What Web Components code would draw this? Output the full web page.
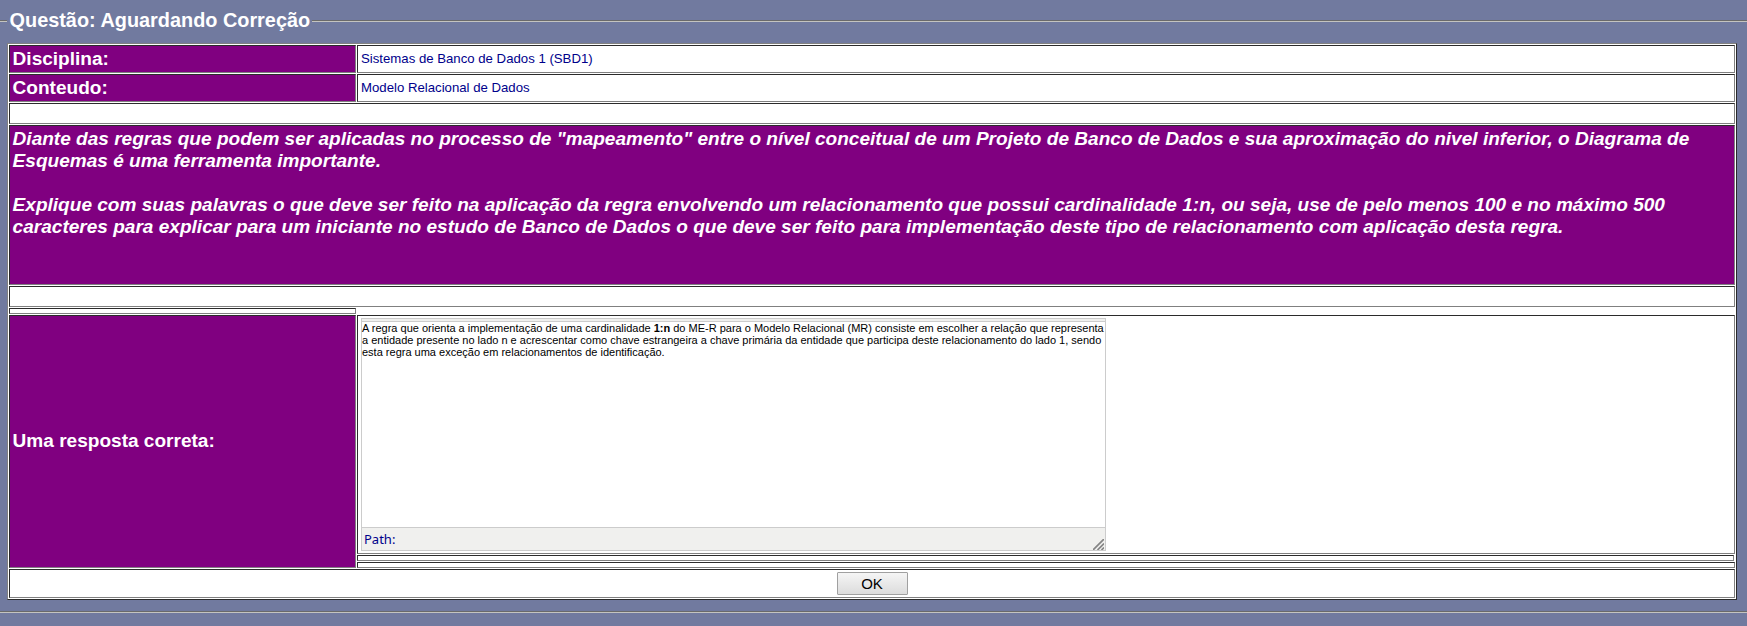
<!DOCTYPE html>
<html lang="pt"><head><meta charset="utf-8"><title>Questão</title>
<style>html,body{margin:0;background:#717a9f}body{height:626px;overflow:hidden;font-family:"Liberation Sans",Arial,sans-serif}</style></head><body>
<question-page></question-page>
<script>
class Base extends HTMLElement{constructor(){super();this.attachShadow({mode:'open'}).innerHTML=this.constructor.html}}
customElements.define('grid-cell',class extends Base{static html=`<style>
:host{box-sizing:border-box;display:flex;align-items:center;min-width:0;padding:0 3px;border:1px solid;border-color:#2b2b2b #808080 #808080 #2b2b2b;background:#fff;color:#00008b;font-size:13.2px;line-height:15px}
:host([data]){padding-bottom:1px}
:host([wide]){grid-column:1/3}
:host([label]){background:#800080;color:#fff;font-weight:bold;font-size:19.06px;line-height:22px;padding-left:2.6px}
:host([question]){align-items:flex-start;font-style:italic;padding-top:2px}
:host([center]){justify-content:center}
:host([editor]){align-items:flex-start;padding-top:2px}
</style><slot></slot>`});
customElements.define('group-frame',class extends Base{static html=`<style>
:host{display:block}.top{display:flex;align-items:center;height:43px;box-sizing:border-box;padding-bottom:1px}
.l,.r,.b{height:1px;border-top:1px solid #6a6a6a;background:#c4c4c0}.l{width:7px}.r{flex:1}
h1{margin:0;padding:0 2px 0 2.6px;font-size:19.86px;line-height:24px;color:#fff;position:relative;top:-1px}
.body{padding:0 10px 0 7px}.b{margin-top:11px}
</style><div class="top"><div class="l"></div><h1><slot name="legend"></slot></h1><div class="r"></div></div><div class="body"><slot></slot></div><div class="b"></div>`});
customElements.define('text-editor',class extends Base{static html=`<style>
:host{box-sizing:border-box;display:flex;flex-direction:column;width:745px;height:233px;border:1px solid #ccc;background:#fff}
.bar{height:2px;background:#f0f0ee;border-bottom:1px solid #ccc}
.text{flex:1;color:#000;font-size:11px;line-height:12px;white-space:nowrap}
.status{height:22px;border-top:1px solid #ccc;background:#f0f0ee;display:flex;justify-content:space-between;align-items:center;padding-left:2px;font:13px/20px "Noto Sans",sans-serif;color:#00008b}
svg{display:block;align-self:flex-end;margin-right:1px}
</style><div class="bar"></div><div class="text"><slot></slot></div><div class="status"><span>Path:</span><svg width="11" height="11" viewBox="0 0 11 11" fill="none" stroke="#858585" stroke-width="1.7"><path d="M0 11L11 0M4.5 11L11 4.5M8.5 11L11 8.5"/></svg></div>`});
customElements.define('push-button',class extends Base{static html=`<style>
:host{display:block}button{display:block;box-sizing:border-box;width:71px;height:23px;margin:0;padding:0;border:1px solid #a0a0a0;border-radius:1px;background:linear-gradient(#f5f5f5,#dcdcdc);font:15px "Liberation Sans",sans-serif;color:#000}
</style><button><slot></slot></button>`});
customElements.define('question-page',class extends Base{static html=`<style>
:host{display:block}
.table{display:grid;box-sizing:border-box;height:557px;grid-template-columns:347px 1fr;grid-template-rows:28px 28px 21px 160px 21px 6px 239px 6px 6px 29px;gap:1px;padding:1px;border:1px solid;border-color:#808080 #2b2b2b #2b2b2b #808080;background:#fff}
.tall{grid-area:7/1/10/2;padding-bottom:2px}.c1{grid-area:6/1}.r7{grid-area:7/2}.r8{grid-area:8/2;margin-right:1px}.r9{grid-area:9/2}.r10{grid-row:10}
</style><group-frame><span slot="legend">Questão: Aguardando Correção</span><div class="table">
<grid-cell label>Disciplina:</grid-cell><grid-cell data>Sistemas de Banco de Dados 1 (SBD1)</grid-cell>
<grid-cell label>Conteudo:</grid-cell><grid-cell data>Modelo Relacional de Dados</grid-cell>
<grid-cell wide></grid-cell>
<grid-cell wide label question><div>Diante das regras que podem ser aplicadas no processo de "mapeamento" entre o nível conceitual de um Projeto de Banco de Dados e sua aproximação do nivel inferior, o Diagrama de<br>Esquemas é uma ferramenta importante.<br><br>Explique com suas palavras o que deve ser feito na aplicação da regra envolvendo um relacionamento que possui cardinalidade 1:n, ou seja, use de pelo menos 100 e no máximo 500<br>caracteres para explicar para um iniciante no estudo de Banco de Dados o que deve ser feito para implementação deste tipo de relacionamento com aplicação desta regra.</div></grid-cell>
<grid-cell wide></grid-cell>
<grid-cell class="c1"></grid-cell>
<grid-cell label class="tall">Uma resposta correta:</grid-cell>
<grid-cell editor class="r7"><text-editor>A regra que orienta a implementação de uma cardinalidade <b>1:n</b> do ME-R para o Modelo Relacional (MR) consiste em escolher a relação que representa<br>a entidade presente no lado n e acrescentar como chave estrangeira a chave primária da entidade que participa deste relacionamento do lado 1, sendo<br>esta regra uma exceção em relacionamentos de identificação.</text-editor></grid-cell>
<grid-cell class="r8"></grid-cell><grid-cell class="r9"></grid-cell>
<grid-cell wide center class="r10"><push-button>OK</push-button></grid-cell>
</div></group-frame>`});
</script></body></html>
